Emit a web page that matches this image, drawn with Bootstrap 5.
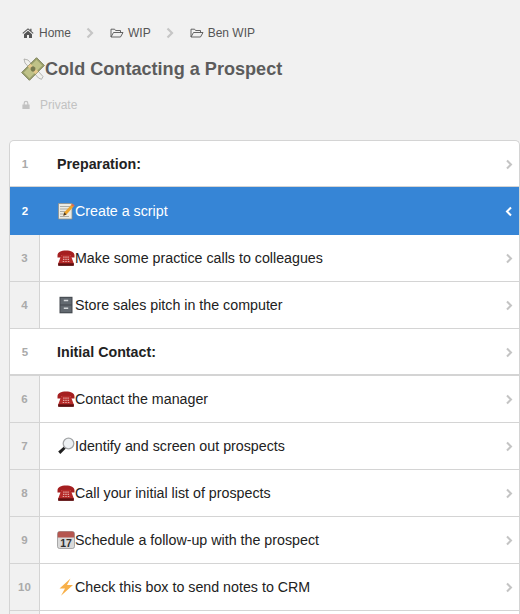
<!DOCTYPE html>
<html lang="en">
<head>
    <meta charset="utf-8">
    <meta name="viewport" content="width=device-width, initial-scale=1">
    <title>Cold Contacting a Prospect</title>
    <link href="https://cdn.jsdelivr.net/npm/bootstrap@5.3.3/dist/css/bootstrap.min.css" rel="stylesheet">
    <style>
        html, body {
            height: 614px;
            overflow: hidden;
        }

        body {
            background-color: #f1f1f1;
            font-family: "Liberation Sans", Arial, sans-serif;
            color: #222;
        }

        .page-head {
            padding: 25px 0 0 22px;
            height: 140px;
        }

        .crumbs {
            font-size: 12px;
            line-height: 16px;
            color: #555;
            height: 16px;
        }

        .crumb-sep {
            margin: 0 16px 0 15px;
        }

        .crumb-icon {
            margin-right: 4px;
        }

        .crumb-home {
            margin-right: 5px;
        }

        .page-title {
            font-size: 18.1px;
            line-height: 24px;
            font-weight: 700;
            color: #5c5c5c;
            margin: 16px 0 0;
            height: 24px;
        }

        .title-icon {
            flex: none;
            margin-left: -1px;
        }

        .private-line {
            font-size: 12px;
            line-height: 16px;
            color: #c2c2c2;
            margin-top: 16px;
        }

        .private-line svg {
            margin-right: 10px;
        }

        .step-list {
            margin-left: 9px;
            width: 511px;
            background: #fff;
            border: 1px solid #d4d4d4;
            border-bottom: 0;
            border-radius: 5px 5px 0 0;
            overflow: hidden;
        }

        .step-row {
            height: 47px;
            border-bottom: 1px solid #d4d4d4;
            font-size: 14.25px;
            color: #222;
        }

        .step-head {
            height: 46px;
            padding-top: 1px;
            font-weight: 700;
        }

        .step-head.thick {
            height: 47px;
            border-bottom-width: 2px;
        }

        .step-active {
            height: 48px;
            background: #3685d6;
            color: #fff;
            border-bottom: 0;
        }

        .step-num {
            width: 30px;
            flex: none;
            padding-top: 2px;
            font-size: 11.5px;
            font-weight: 700;
            color: #aaa;
            background: #f1f1f1;
            border-right: 1px solid #d4d4d4;
        }

        .step-head .step-num,
        .step-active .step-num {
            background: transparent;
            border-right: 0;
        }

        .step-active .step-num {
            color: #fff;
        }

        .step-text {
            padding-left: 17px;
            flex-grow: 1;
            white-space: nowrap;
        }

        .step-text span {
            padding-top: 2px;
        }

        .step-icon {
            flex: none;
        }

        .step-chev {
            margin-right: 6px;
            flex: none;
        }
    </style>
</head>

<body>
    <svg width="0" height="0" class="d-block">
        <defs>
            <symbol id="ic-phone" viewBox="0 0 18 18">
                <path d="M.5 6.500C.5 3 4 1.500 9 1.500s8.500 1.500 8.500 5v2h-4.100V6.300H4.600v2.200H.5z" fill="#a51f20"/>
                <path d="M4 7 5 5.800h8L14 7l2.800 7.500V16H1.200v-1.500z" fill="#b52a29"/>
                <path d="M1.200 14.300h15.600v2.600H1.200z" fill="#5e0f10"/>
                <path d="M6.200 7.500h1.400v1.200H6.200zM8.300 7.500h1.400v1.200H8.300zM10.400 7.500h1.400v1.200h-1.400zM6 9.700h1.400v1.200H6zM8.300 9.700h1.400v1.200H8.300zM10.600 9.700H12v1.200h-1.400zM5.700 11.900h1.500v1.200H5.700zM8.300 11.900h1.400v1.200H8.300zM10.800 11.900h1.500v1.200h-1.500z" fill="#e4a9a4"/>
            </symbol>
            <symbol id="ic-memo" viewBox="0 0 18 18">
                <path d="M1.500 1.500h13.500v15.500H1.500z" fill="#ecebe3" stroke="#8f8f8a" stroke-width=".8"/>
                <path d="M3 4.500h10.500M3 7h10.500M3 9.500h7M3 12h5M3 14.500h9" stroke="#a5a59f" stroke-width=".9"/>
                <path d="M15.300 1.700 17.500 3.500 9.500 12.500l-3.200 1.200 1-3.400z" fill="#eda52d"/>
                <path d="M15.300 1.700 17.500 3.500l-1.200 1.300-2.200-1.800z" fill="#d9685d"/>
                <path d="m6.300 13.700 1-3.400 2.200 2.200z" fill="#4a3a2a"/>
            </symbol>
            <symbol id="ic-cabinet" viewBox="0 0 18 18">
                <path d="M2.500.8h13v16.500h-13z" fill="#42474d"/>
                <path d="M3.500 1.800h11v6.600h-11zM3.500 9.600h11v6.600h-11z" fill="#626970"/>
                <path d="M6.800 3.800h4.400v1.500H6.800zM6.800 11.600h4.400v1.500H6.800z" fill="#d4d7da"/>
            </symbol>
            <symbol id="ic-lens" viewBox="0 0 18 18">
                <path d="M7 9.500 1.200 14.500 3.300 17 8.800 11.500z" fill="#1f1f1f"/>
                <circle cx="11.500" cy="6.500" r="5.300" fill="#eef1f3" stroke="#a4a6a8" stroke-width="1.300"/>
            </symbol>
            <symbol id="ic-cal" viewBox="0 0 18 18">
                <rect x=".5" y=".5" width="17" height="17" rx="2" fill="#d9d9d9" stroke="#8b8b8b" stroke-width=".7"/>
                <path d="M.7 2.500a2 2 0 0 1 2-2h12.600a2 2 0 0 1 2 2v4H.7z" fill="#b5564f"/>
                <text x="9" y="15.800" font-size="10.500" font-weight="700" text-anchor="middle" fill="#2f2f2f" font-family="Liberation Sans, sans-serif">17</text>
            </symbol>
            <symbol id="ic-bolt" viewBox="0 0 18 18">
                <path d="M13.500.5 2.500 10.500h5.500L4 17.700 16 7h-6z" fill="#f8b049"/>
            </symbol>
            <symbol id="ic-money" viewBox="0 0 24 24">
                <path d="M3 2 7 3 22 19.500l-1.500 2.800-3-1.300L4 6z" fill="#f0f0ec" stroke="#9b9b96" stroke-width=".7"/>
                <g transform="rotate(-45 12 12)">
                    <rect x="1.500" y="6.500" width="21" height="11" fill="#9da36e" stroke="#6f7349" stroke-width=".8"/>
                    <rect x="3" y="8" width="18" height="8" fill="#bfc288"/>
                    <rect x="10" y="6.500" width="4" height="11" fill="#e5c98c"/>
                    <circle cx="12" cy="12" r="2.500" fill="#75794f"/>
                </g>
            </symbol>
            <symbol id="ic-home" viewBox="0 0 12 12">
                <path d="M6 1.200.4 6l.7.8L6 2.600l4.900 4.200.7-.8-2.100-1.800V1.700H8.200v1.300zM2 7.200V11h3V8h2v3h3V7.200L6 3.800z" fill="#555"/>
            </symbol>
            <symbol id="ic-folder" viewBox="0 0 14 12">
                <path d="M1 10V2.200h3.600l1 1.300h4.900v2M1 10l2.500-4.500H13L10.500 10z" fill="none" stroke="#555" stroke-width=".9" stroke-linejoin="round"/>
            </symbol>
            <symbol id="ic-lock" viewBox="0 0 10 12">
                <path d="M2 5.500V3.800a3 3 0 0 1 6 0v1.700H9.500V11H.5V5.500zM3.500 5.500h3V3.800a1.500 1.500 0 0 0-3 0z" fill="#c2c2c2"/>
            </symbol>
        </defs>
    </svg>

    <div class="page-head">
        <div class="crumbs d-flex align-items-center">
            <svg class="crumb-home" width="12" height="12"><use href="#ic-home"/></svg>
            <span>Home</span>
            <svg class="crumb-sep" width="8" height="12" viewBox="0 0 8 12"><path d="M1.500 1.500 6 6 1.500 10.500" fill="none" stroke="#c6c6c6" stroke-width="2.200"/></svg>
            <svg class="crumb-icon" width="14" height="12"><use href="#ic-folder"/></svg>
            <span>WIP</span>
            <svg class="crumb-sep" width="8" height="12" viewBox="0 0 8 12"><path d="M1.500 1.500 6 6 1.500 10.500" fill="none" stroke="#c6c6c6" stroke-width="2.200"/></svg>
            <svg class="crumb-icon" width="14" height="12"><use href="#ic-folder"/></svg>
            <span>Ben WIP</span>
        </div>
        <h1 class="page-title d-flex align-items-center">
            <svg class="title-icon" width="24" height="24"><use href="#ic-money"/></svg>Cold Contacting a Prospect
        </h1>
        <div class="private-line d-flex align-items-center">
            <svg width="8" height="10" viewBox="0 0 10 12"><use href="#ic-lock"/></svg>
            <span>Private</span>
        </div>
    </div>

    <div class="step-list" id="steps"></div>

    <script>
        const steps = [
            { text: "Preparation:", head: true },
            { text: "Create a script", icon: "memo", active: true },
            { text: "Make some practice calls to colleagues", icon: "phone" },
            { text: "Store sales pitch in the computer", icon: "cabinet" },
            { text: "Initial Contact:", head: true, thick: true },
            { text: "Contact the manager", icon: "phone" },
            { text: "Identify and screen out prospects", icon: "lens" },
            { text: "Call your initial list of prospects", icon: "phone" },
            { text: "Schedule a follow-up with the prospect", icon: "cal" },
            { text: "Check this box to send notes to CRM", icon: "bolt" },
            { text: "", blank: true }
        ];

        const list = document.getElementById("steps");
        steps.forEach(function (step, i) {
            const row = document.createElement("div");
            let cls = "step-row d-flex align-items-center";
            if (step.head) cls += " step-head";
            if (step.thick) cls += " thick";
            if (step.active) cls += " step-active";
            row.className = cls;
            const icon = step.icon ? `<svg class="step-icon" width="18" height="18"><use href="#ic-${step.icon}"/></svg>` : "";
            const chev = step.active
                ? `<path d="M6 1.500 2 5.500 6 9.500" fill="none" stroke="#fff" stroke-width="2"/>`
                : `<path d="M2 1.500 6 5.500 2 9.500" fill="none" stroke="#c4c4c4" stroke-width="2"/>`;
            row.innerHTML = `<div class="step-num d-flex align-items-center justify-content-center align-self-stretch">${step.blank ? "" : i + 1}</div>
                <div class="step-text d-flex align-items-center">${icon}<span>${step.text}</span></div>
                <svg class="step-chev" width="8" height="11" viewBox="0 0 8 11">${chev}</svg>`;
            list.appendChild(row);
        });
    </script>
    <script src="https://cdn.jsdelivr.net/npm/bootstrap@5.3.3/dist/js/bootstrap.bundle.min.js"></script>
</body>

</html>
